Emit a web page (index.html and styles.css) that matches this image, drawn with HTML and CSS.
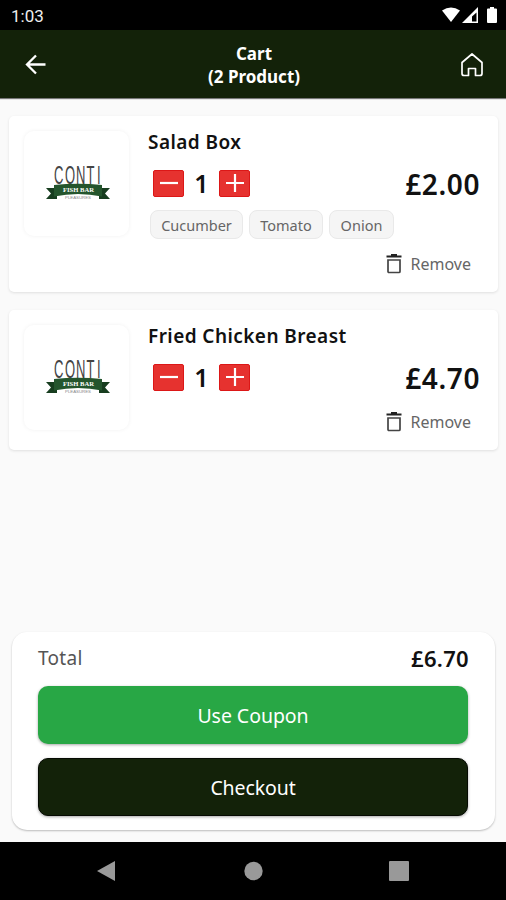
FILE: index.html
```html
<!DOCTYPE html>
<html lang="en">
<head>
<meta charset="utf-8">
<title>Cart</title>
<link rel="stylesheet" href="styles.css">
</head>
<body>
<svg width="0" height="0" class="defs" aria-hidden="true">
  <symbol id="logo" viewBox="0 -10 66 50">
    <text class="logo-name" transform="scale(.5 1)" x="16 38 60 81 102" y="20">CONTI</text>
    <path d="M0 24h11v11H0l5-5.500zM64 24H53v11h11l-5-5.500z" fill="#173d1f"/>
    <path d="M8 21Q32 18.500 56 21V32.500Q32 27.500 8 32.500z" fill="#24552d"/>
    <text class="logo-band" x="17" y="27.500" textLength="31" lengthAdjust="spacingAndGlyphs">FISH BAR</text>
    <text class="logo-sub" x="19" y="34.500" textLength="26" lengthAdjust="spacingAndGlyphs">PLEASURES</text>
  </symbol>
  <symbol id="trash" viewBox="0 0 16 20">
    <path d="M5 1h6M.5 2.500h15" fill="none" stroke="#222" stroke-width="2"/>
    <path d="M2 6h12v11.500q0 1-1 1H3q-1 0-1-1z" fill="none" stroke="#444" stroke-width="1.700"/>
  </symbol>
</svg>
<div class="status">
  <span class="time">1:03</span>
  <svg width="58" height="20" viewBox="0 0 58 20" fill="#fff">
    <path d="M1 5.500Q10 -.5 19 5.500L10 17z"/>
    <path fill-rule="evenodd" d="M21 18L37 2v16zM31 16.500h4.500V7.500L31 11.500z"/>
    <path d="M46 4.500q0-1 1-1h2V2h4v1.500h2q1 0 1 1V17q0 1-1 1h-8q-1 0-1-1z"/>
  </svg>
</div>
<header class="header">
  <svg width="22" height="22" viewBox="0 0 22 22" fill="none" stroke="#fff" stroke-width="2.300"><path d="M20.500 10.500H2M11 1.500L2 10.500l9 9"/></svg>
  <h1 class="title">Cart<br><span class="count">(2 Product)</span></h1>
  <svg width="22" height="24" viewBox="0 0 22 24" fill="none" stroke="#fff" stroke-width="1.700" stroke-linejoin="round"><path d="M1 9.500L11 1l10 8.500v11q0 2-2 2h-4.500v-7h-7v7H3q-2 0-2-2z"/></svg>
</header>
<main class="items">
  <article class="card card-tall">
    <div class="thumb"><svg class="logo"><use href="#logo"/></svg></div>
    <div class="info">
      <h2 class="name">Salad Box</h2>
      <div class="row">
        <button class="step"><svg width="20" height="20"><path d="M1 10h18"/></svg></button>
        <span class="qty">1</span>
        <button class="step"><svg width="20" height="20"><path d="M1 10h18M10 1v18"/></svg></button>
        <span class="price">£2.00</span>
      </div>
      <div class="tags"><span class="tag tag-a">Cucumber</span><span class="tag tag-b">Tomato</span><span class="tag tag-c">Onion</span></div>
      <div class="remove"><svg width="16" height="20"><use href="#trash"/></svg><span>Remove</span></div>
    </div>
  </article>
  <article class="card">
    <div class="thumb"><svg class="logo"><use href="#logo"/></svg></div>
    <div class="info">
      <h2 class="name">Fried Chicken Breast</h2>
      <div class="row">
        <button class="step"><svg width="20" height="20"><path d="M1 10h18"/></svg></button>
        <span class="qty">1</span>
        <button class="step"><svg width="20" height="20"><path d="M1 10h18M10 1v18"/></svg></button>
        <span class="price">£4.70</span>
      </div>
      <div class="remove"><svg width="16" height="20"><use href="#trash"/></svg><span>Remove</span></div>
    </div>
  </article>
</main>
<section class="summary">
  <div class="total"><span>Total</span><strong>£6.70</strong></div>
  <button class="btn coupon">Use Coupon</button>
  <button class="btn checkout">Checkout</button>
</section>
<nav class="nav">
  <svg width="20" height="22" fill="#999"><path d="M1 11L19 1v20z"/></svg>
  <svg width="20" height="20" fill="#999"><circle cx="10.500" cy="10" r="9.200"/></svg>
  <svg width="20" height="20" fill="#999"><rect width="20" height="20" rx="1"/></svg>
</nav>
</body>
</html>
```
FILE: styles.css
```css
* { box-sizing: border-box; }
body {
  margin: 0;
  width: 506px;
  height: 900px;
  display: flex;
  flex-direction: column;
  overflow: hidden;
  background: #fafafa;
  font-family: "Noto Sans", "Open Sans", sans-serif;
  color: #111;
}
button { border: 0; padding: 0; font-family: inherit; }
svg { display: block; flex: none; }
.defs { position: absolute; }
.status {
  height: 30px;
  flex: none;
  display: flex;
  justify-content: space-between;
  padding: 5px 7px 0 11px;
  background: #000;
  color: #eee;
}
.time { font: 17px/23px Roboto, sans-serif; }
.header {
  height: 68px;
  flex: none;
  display: flex;
  align-items: center;
  justify-content: space-between;
  padding: 1px 23px 0 25px;
  background: #132209;
  box-shadow: 0 1px 1px #777;
}
.title { margin: 0; font-size: 17px; line-height: 23px; font-weight: 700; text-align: center; color: #fff; }
.items { flex: 1; padding: 18px 8px 0 9px; display: flex; flex-direction: column; gap: 18px; }
.card {
  height: 140px;
  display: flex;
  gap: 19px;
  padding: 15px 19px 0 15px;
  border-radius: 5px;
  background: #fff;
  box-shadow: 0 1px 3px rgba(0,0,0,.11);
}
.card-tall { height: 176px; }
.thumb {
  width: 105px;
  height: 105px;
  flex: none;
  display: flex;
  justify-content: center;
  padding: 23px 0 0 4px;
  border-radius: 10px;
  box-shadow: 0 0 4px rgba(0,0,0,.06);
}
.logo { width: 66px; height: 50px; }
.logo-name { font: 26px "Liberation Sans", sans-serif; fill: #444; }
.logo-band { font: bold 6px "Liberation Serif", serif; fill: #fff; }
.logo-sub { font: 4px "Liberation Sans", sans-serif; fill: #888; }
.info { flex: 1; min-width: 0; }
.name { margin: -2px 0 0; font-size: 19px; line-height: 26px; font-weight: 600; letter-spacing: .43px; white-space: nowrap; }
.row { display: flex; align-items: center; height: 28px; margin-top: 14px; padding-left: 5px; }
.step { width: 31px; height: 27px; border-radius: 2px; background: #e6322f; border: 1px solid #dc1717; display: flex; align-items: center; justify-content: center; }
.step path { stroke: #fff; stroke-width: 2.200; }
.qty { width: 35px; text-align: center; font-size: 25px; font-weight: 600; line-height: 28px; }
.price { margin: 2px -1px 0 auto; font-size: 28px; font-weight: 600; line-height: 28px; letter-spacing: .6px; }
.tags { display: flex; gap: 6px; margin-top: 13px; padding-left: 2px; }
.tag { height: 29px; border: 1px solid #e9e9e9; border-radius: 8px; background: #f5f5f5; color: #666; font-size: 14.500px; line-height: 28px; text-align: center; }
.tag-a { width: 93px; }
.tag-b { width: 74px; }
.tag-c { width: 65px; }
.remove { display: flex; justify-content: flex-end; align-items: center; gap: 9px; height: 24px; margin: 19px 8px 0 0; font-size: 16px; color: #666; }
.tags + .remove { margin-top: 13px; }
.summary {
  width: 483px;
  height: 198px;
  flex: none;
  margin: 0 0 12px 12px;
  padding: 11px 27px 0 26px;
  border-radius: 15px;
  background: #fff;
  box-shadow: 0 1px 2px rgba(0,0,0,.25);
}
.total { display: flex; justify-content: space-between; align-items: center; height: 30px; font-size: 19px; letter-spacing: .3px; color: #555; }
.total strong { color: #111; font-size: 22px; font-weight: 600; margin-right: -1px; }
.btn { display: block; width: 100%; height: 58px; border-radius: 10px; color: #fff; font-size: 19.500px; box-shadow: 0 1px 3px rgba(0,0,0,.35); }
.coupon { margin-top: 13px; background: #28a745; letter-spacing: -.05px; }
.checkout { margin-top: 14px; background: #132209; border: 1px solid #050a02; letter-spacing: -.1px; }
.nav { height: 58px; flex: none; display: flex; align-items: center; justify-content: space-between; padding: 0 97px 0 96px; background: #000; }
```
